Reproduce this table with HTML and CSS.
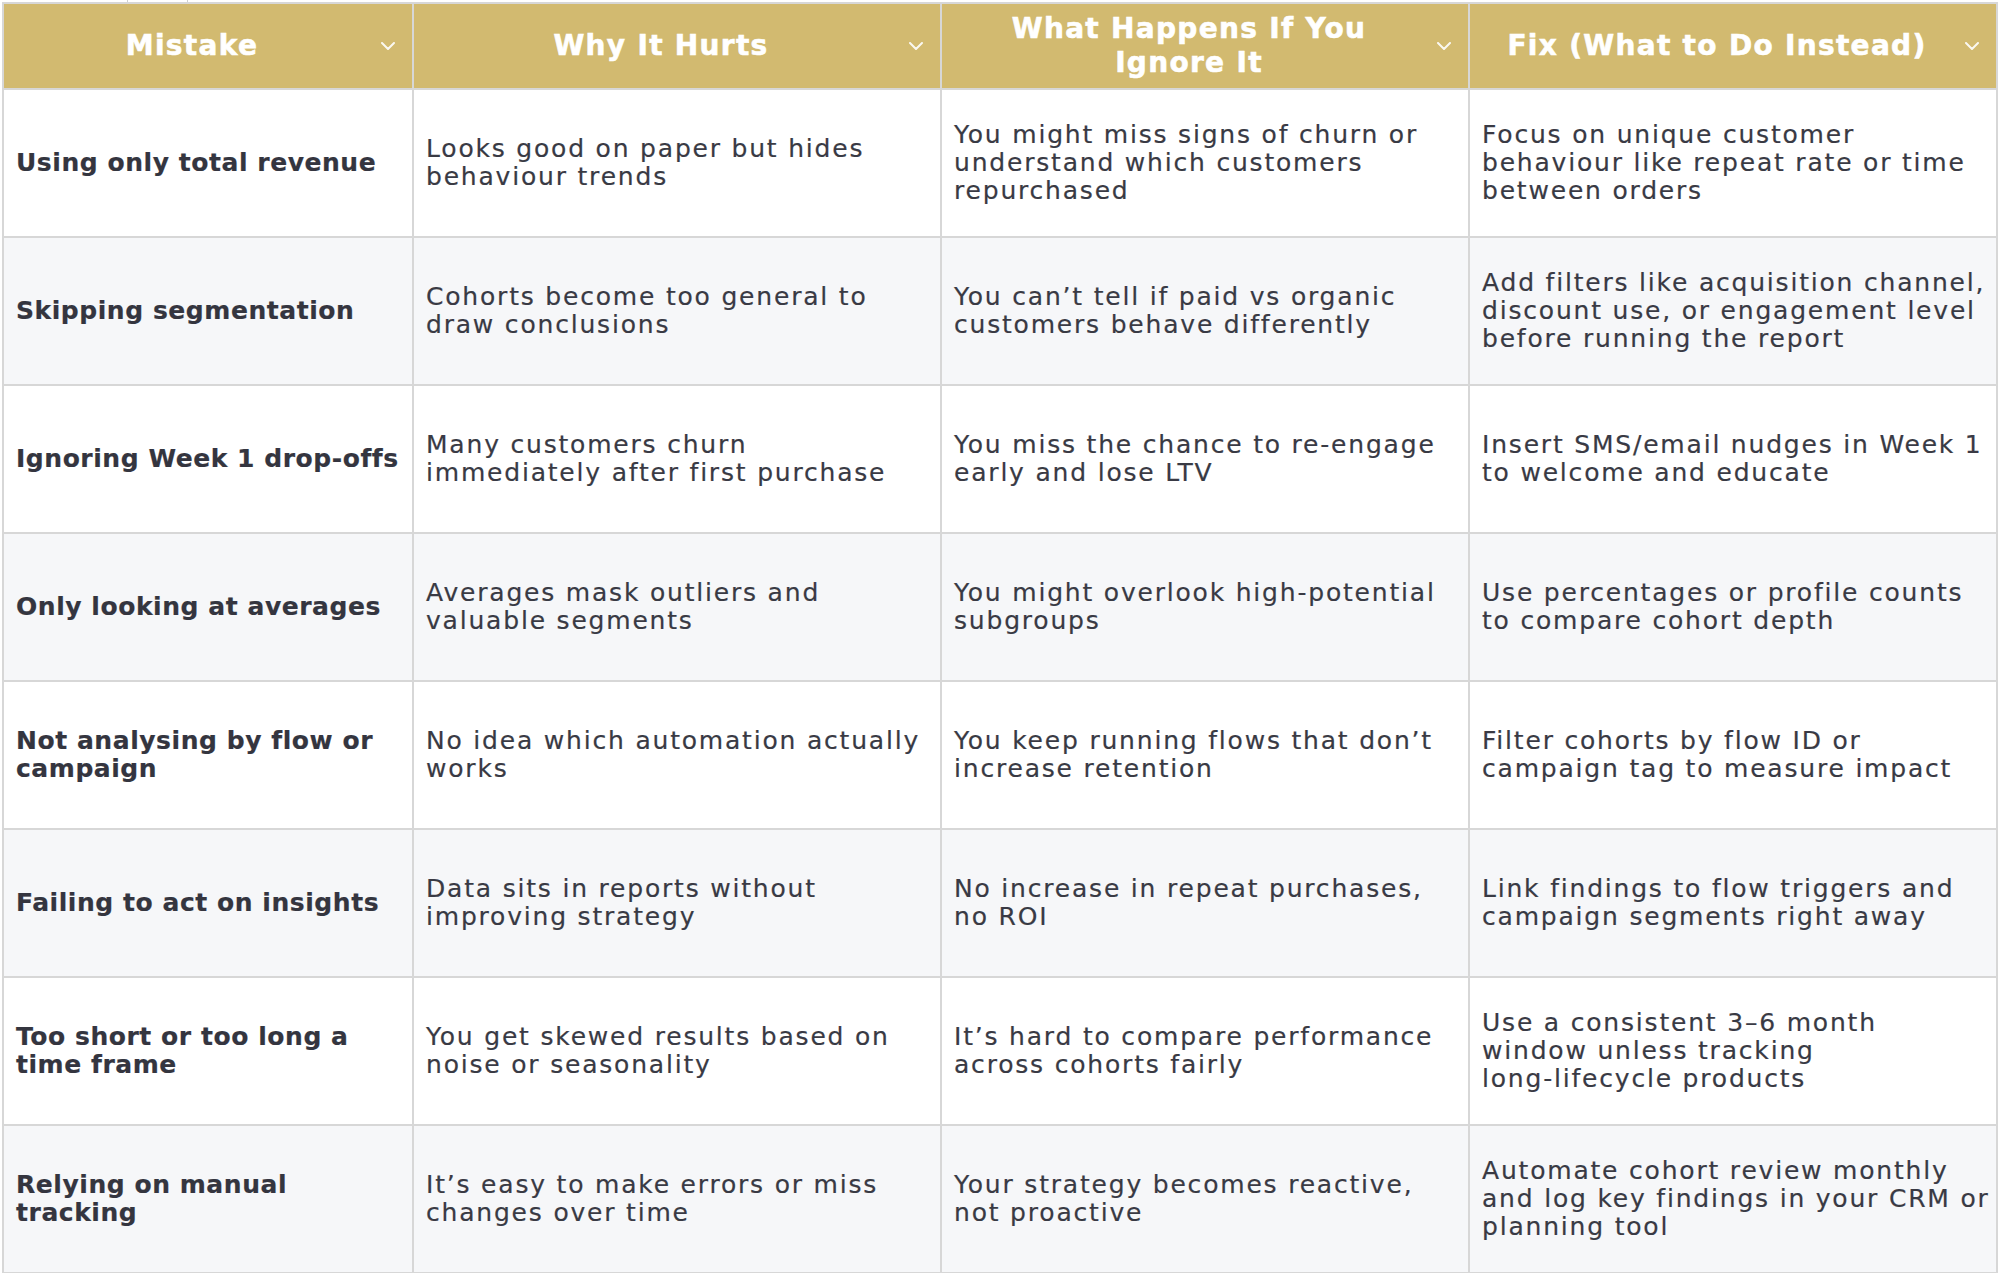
FILE: index.html
```html
<!DOCTYPE html>
<html lang="en">
<head>
<meta charset="utf-8">
<title>Cohort analysis mistakes</title>
<link rel="stylesheet" href="styles.css">
</head>
<body>
<div class="strip"><span class="stub a"></span><span class="stub b"></span></div>
<div class="table">
  <div class="th"><span class="th-text">Mistake</span><svg class="chev" viewBox="0 0 14 8"><polyline points="1,1 7,7 13,1"/></svg></div>
  <div class="th"><span class="th-text">Why It Hurts</span><svg class="chev" viewBox="0 0 14 8"><polyline points="1,1 7,7 13,1"/></svg></div>
  <div class="th"><span class="th-text">What Happens If You<br>Ignore It</span><svg class="chev" viewBox="0 0 14 8"><polyline points="1,1 7,7 13,1"/></svg></div>
  <div class="th"><span class="th-text">Fix (What to Do Instead)</span><svg class="chev" viewBox="0 0 14 8"><polyline points="1,1 7,7 13,1"/></svg></div>

  <div class="td key">Using only total revenue</div>
  <div class="td">Looks good on paper but hides<br>behaviour trends</div>
  <div class="td">You might miss signs of churn or<br>understand which customers<br>repurchased</div>
  <div class="td">Focus on unique customer<br>behaviour like repeat rate or time<br>between orders</div>

  <div class="td key alt">Skipping segmentation</div>
  <div class="td alt">Cohorts become too general to<br>draw conclusions</div>
  <div class="td alt">You can’t tell if paid vs organic<br>customers behave differently</div>
  <div class="td alt">Add filters like acquisition channel,<br>discount use, or engagement level<br>before running the report</div>

  <div class="td key">Ignoring Week 1 drop-offs</div>
  <div class="td">Many customers churn<br>immediately after first purchase</div>
  <div class="td">You miss the chance to re-engage<br>early and lose LTV</div>
  <div class="td">Insert SMS/email nudges in Week 1<br>to welcome and educate</div>

  <div class="td key alt">Only looking at averages</div>
  <div class="td alt">Averages mask outliers and<br>valuable segments</div>
  <div class="td alt">You might overlook high-potential<br>subgroups</div>
  <div class="td alt">Use percentages or profile counts<br>to compare cohort depth</div>

  <div class="td key">Not analysing by flow or<br>campaign</div>
  <div class="td">No idea which automation actually<br>works</div>
  <div class="td">You keep running flows that don’t<br>increase retention</div>
  <div class="td">Filter cohorts by flow ID or<br>campaign tag to measure impact</div>

  <div class="td key alt">Failing to act on insights</div>
  <div class="td alt">Data sits in reports without<br>improving strategy</div>
  <div class="td alt">No increase in repeat purchases,<br>no ROI</div>
  <div class="td alt">Link findings to flow triggers and<br>campaign segments right away</div>

  <div class="td key">Too short or too long a<br>time frame</div>
  <div class="td">You get skewed results based on<br>noise or seasonality</div>
  <div class="td">It’s hard to compare performance<br>across cohorts fairly</div>
  <div class="td">Use a consistent 3–6 month<br>window unless tracking<br>long-lifecycle products</div>

  <div class="td key alt">Relying on manual<br>tracking</div>
  <div class="td alt">It’s easy to make errors or miss<br>changes over time</div>
  <div class="td alt">Your strategy becomes reactive,<br>not proactive</div>
  <div class="td alt">Automate cohort review monthly<br>and log key findings in your CRM or<br>planning tool</div>
</div>
</body>
</html>
```

FILE: styles.css
```css
html, body {
  margin: 0;
  padding: 0;
  background: #ffffff;
}

body {
  font-family: "DejaVu Sans", "Liberation Sans", sans-serif;
  color: #3b3c46;
}

.strip {
  display: flex;
  height: 2px;
  overflow: hidden;
}

.stub {
  display: block;
  height: 2px;
  border-right: 1px solid #cfcfcf;
  background: #ffffff;
}

.stub.a { width: 127px; }
.stub.b { width: 59px; }

.table {
  display: grid;
  grid-template-columns: 408px 526px 526px 526px;
  grid-template-rows: 84px repeat(8, 146px);
  gap: 2px;
  padding: 2px;
  margin-left: 2px;
  width: 1992px;
  background: #d7d7d7;
}

.th {
  position: relative;
  display: flex;
  align-items: center;
  justify-content: center;
  background: #d2ba70;
  padding: 0 40px 0 8px;
}

.th-text {
  color: #ffffff;
  font-weight: bold;
  font-size: 28px;
  line-height: 34px;
  letter-spacing: 1.3px;
  text-align: center;
  white-space: nowrap;
  -webkit-text-stroke: 0.6px #ffffff;
}

.chev {
  position: absolute;
  right: 17px;
  top: 38px;
  width: 14px;
  height: 8px;
  fill: none;
  stroke: #ffffff;
  stroke-width: 2;
  stroke-linecap: round;
  stroke-linejoin: round;
  opacity: 0.9;
}

.td {
  display: flex;
  align-items: center;
  background: #ffffff;
  padding: 0 10px 0 12px;
  font-size: 25px;
  line-height: 28px;
  letter-spacing: 1.8px;
  white-space: nowrap;
  color: #393a44;
  -webkit-text-stroke: 0.2px #393a44;
}

.td.alt {
  background: #f6f7f9;
}

.td.key {
  font-weight: bold;
  letter-spacing: 0.55px;
  color: #34353f;
  -webkit-text-stroke: 0.2px #34353f;
}
```
